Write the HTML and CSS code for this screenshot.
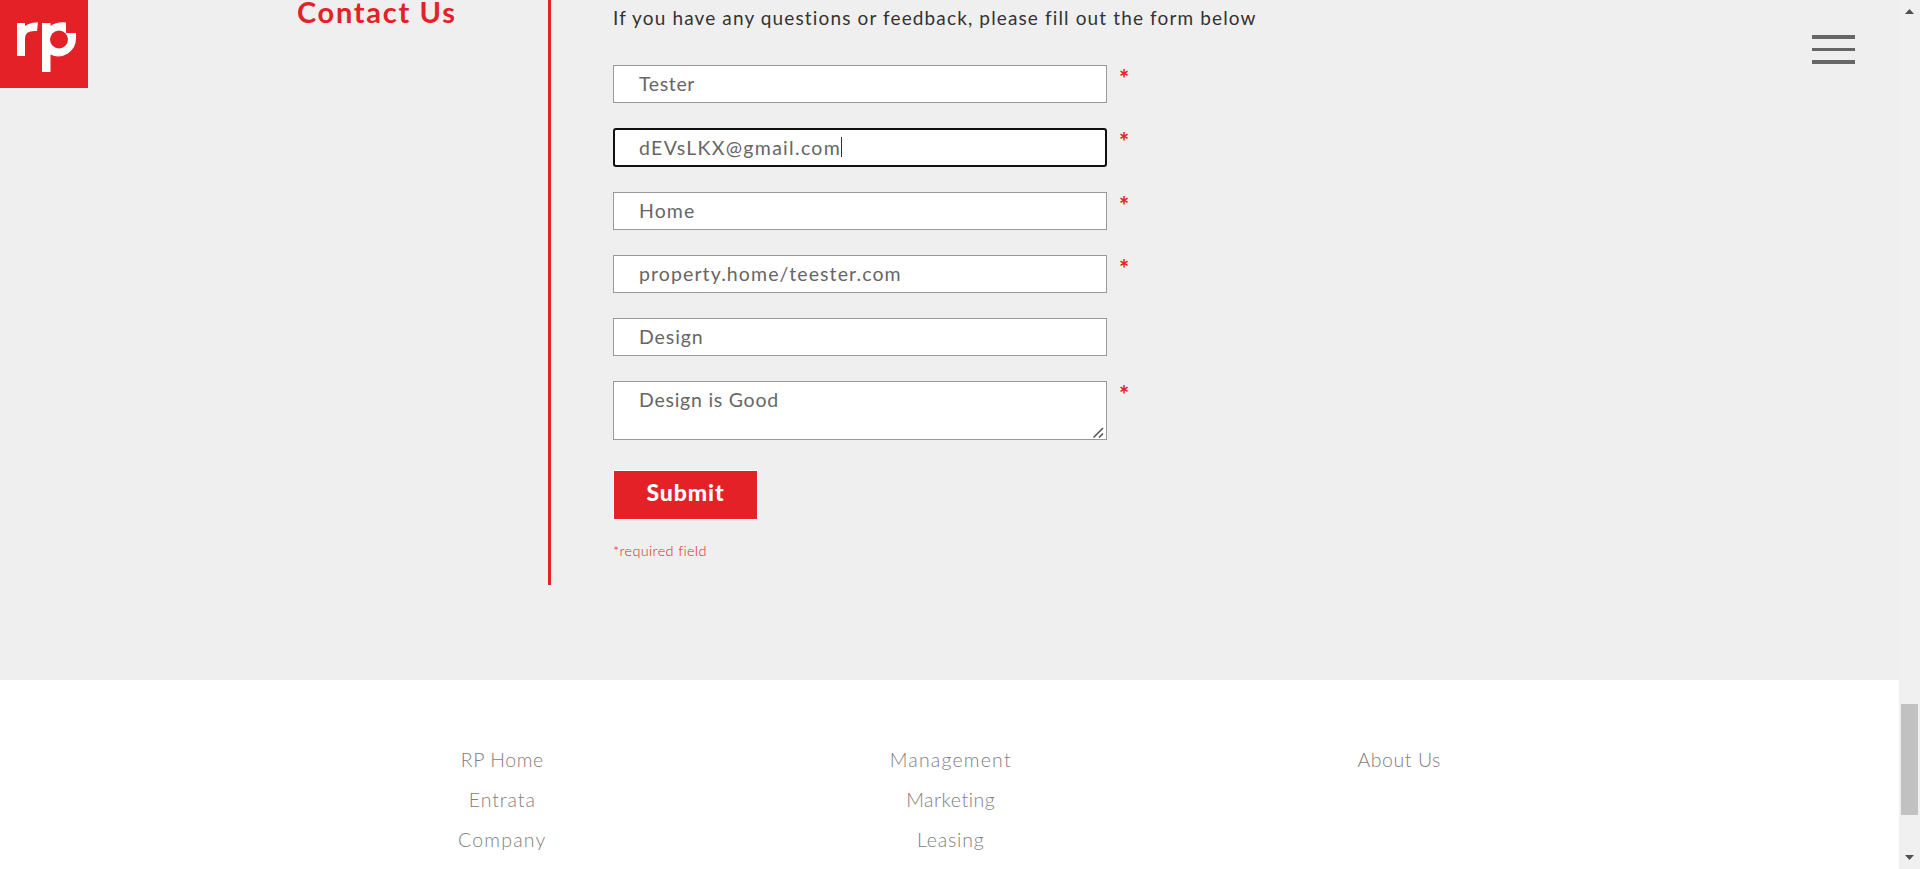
FILE: index.html
```
<!DOCTYPE html>
<html lang="en">
<head>
<meta charset="utf-8">
<title>Contact Us</title>
<link rel="stylesheet" href="styles.css">
</head>
<body>
<div class="window">
  <div class="page">
    <section class="contact">
      <div class="side"><h1 class="title">Contact Us</h1></div>
      <div class="form">
        <p class="intro">If you have any questions or feedback, please fill out the form below</p>
        <div class="row"><div class="field"><span class="v-name">Tester</span></div><span class="star">*</span></div>
        <div class="row"><div class="field focused"><span class="v-mail">dEVsLKX@gmail.com</span><i class="caret"></i></div><span class="star">*</span></div>
        <div class="row"><div class="field"><span class="v-home">Home</span></div><span class="star">*</span></div>
        <div class="row"><div class="field"><span class="v-url">property.home/teester.com</span></div><span class="star">*</span></div>
        <div class="row"><div class="field"><span class="v-topic">Design</span></div></div>
        <div class="row"><div class="field area"><span class="v-msg">Design is Good</span>
          <svg class="grip" width="11" height="11" viewBox="0 0 11 11"><path d="M.5 10.5L10 1M6 10.5l4-4" fill="none" stroke="#505050" stroke-width="1.5"/></svg>
        </div><span class="star">*</span></div>
        <button class="submit">Submit</button>
        <p class="note">*required field</p>
      </div>
    </section>
    <footer class="footer">
      <nav class="col"><a class="l-home">RP Home</a><a class="l-ent">Entrata</a><a class="l-com">Company</a></nav>
      <nav class="col"><a class="l-man">Management</a><a class="l-mar">Marketing</a><a class="l-lea">Leasing</a></nav>
      <nav class="col"><a class="l-abo">About Us</a></nav>
    </footer>
    <svg class="logo" width="88" height="88" viewBox="0 0 88 88">
      <rect width="88" height="88" fill="#e42127"/>
      <path d="M17 23h8v3q5-4 13-3.500l-1 8.500q-12-1-12 7v18h-8z" fill="#fff"/>
      <path d="M42 23h8.500v3q6-4.500 15.500-3.500v10.500h10v5q0 10-8 15.500q-9 5.500-17.500 1v17.500H42z" fill="#fff"/>
      <circle cx="59" cy="39.500" r="9" fill="#e42127"/>
    </svg>
    <div class="menu"><i class="bar"></i><i class="bar mid"></i><i class="bar"></i></div>
  </div>
  <div class="scrollbar">
    <svg class="arrow" width="9" height="5" viewBox="0 0 9 5"><path d="M0 5L4.500 0L9 5z" fill="#505050"/></svg>
    <div class="thumb"></div>
    <svg class="arrow" width="9" height="5" viewBox="0 0 9 5"><path d="M0 0L4.500 5L9 0z" fill="#505050"/></svg>
  </div>
</div>
</body>
</html>
```
FILE: styles.css
```
* { box-sizing: border-box; }
body { margin: 0; font-family: Lato, "Liberation Sans", sans-serif; overflow: hidden; }
p, h1 { margin: 0; }
.window { display: flex; width: 1920px; height: 869px; overflow: hidden; }
.page { position: relative; flex: 1; background: #fff; display: flex; flex-direction: column; }
.contact { display: flex; height: 680px; padding-bottom: 95px; background: #efefef; }
.side { width: 551px; height: 585px; padding-left: 297px; border-right: 3px solid #e42127; }
.title { font-size: 29px; line-height: 24px; font-weight: 700; color: #e42127; letter-spacing: 1.700px; white-space: nowrap; }
.form { display: flex; flex-direction: column; align-items: flex-start; padding-left: 62px; }
.intro { font-size: 19px; line-height: 24px; height: 65.100px; padding-top: 6px; color: #333; letter-spacing: 1.130px; white-space: nowrap; }
.row { display: flex; height: 63.250px; }
.field { position: relative; display: flex; align-items: center; width: 494px; height: 38px; padding: 0 25px 1px; background: #fff; border: 1px solid #999; font-size: 19.500px; color: #666; white-space: nowrap; }
.field.focused { border: 2px solid #101010; border-radius: 3px; height: 39px; padding: 0 24px 1px; }
.field.area { height: 59px; align-items: flex-start; padding-top: 6px; line-height: 24px; }
.v-name { letter-spacing: .650px; }
.v-mail { letter-spacing: 1.300px; }
.v-home { letter-spacing: 1.100px; }
.v-url { letter-spacing: 1.100px; }
.v-topic { letter-spacing: .900px; }
.v-msg { letter-spacing: .750px; }
.caret { width: 1px; height: 20px; background: #333; }
.grip { position: absolute; right: 2px; bottom: 1px; }
.star { padding-left: 12px; font-size: 24px; font-weight: 700; line-height: 27px; color: #e42127; }
.submit { margin-top: 25.500px; width: 145px; height: 50px; padding: 0 0 6px; border: 1px solid #fff; background: #e42127; color: #fff; font: 900 23px Lato, sans-serif; letter-spacing: .900px; }
.note { margin-top: 21px; font-size: 14.500px; line-height: 20px; font-weight: 300; color: #e42127; letter-spacing: .330px; }
.footer { display: flex; padding: 60px 0 0 278px; }
.col { display: flex; flex-direction: column; align-items: center; width: 448.500px; font-size: 19.500px; line-height: 40px; font-weight: 300; color: #808080; white-space: nowrap; }
.l-home { letter-spacing: .550px; }
.l-ent { letter-spacing: .950px; }
.l-com { letter-spacing: 1.200px; }
.l-man { letter-spacing: 1.200px; }
.l-mar { letter-spacing: .550px; }
.l-lea { letter-spacing: .800px; }
.l-abo { letter-spacing: .550px; }
.logo { position: absolute; left: 0; top: 0; }
.menu { position: absolute; left: 1812px; top: 35px; display: flex; flex-direction: column; gap: 9px; width: 43px; }
.bar { height: 4px; background: #666; }
.bar.mid { height: 3px; }
.scrollbar { display: flex; flex-direction: column; align-items: center; justify-content: space-between; width: 21px; padding: 9px 0; background: #f0f0f0; }
.thumb { width: 17px; height: 111px; margin-top: 650px; background: #c1c1c1; }
```
